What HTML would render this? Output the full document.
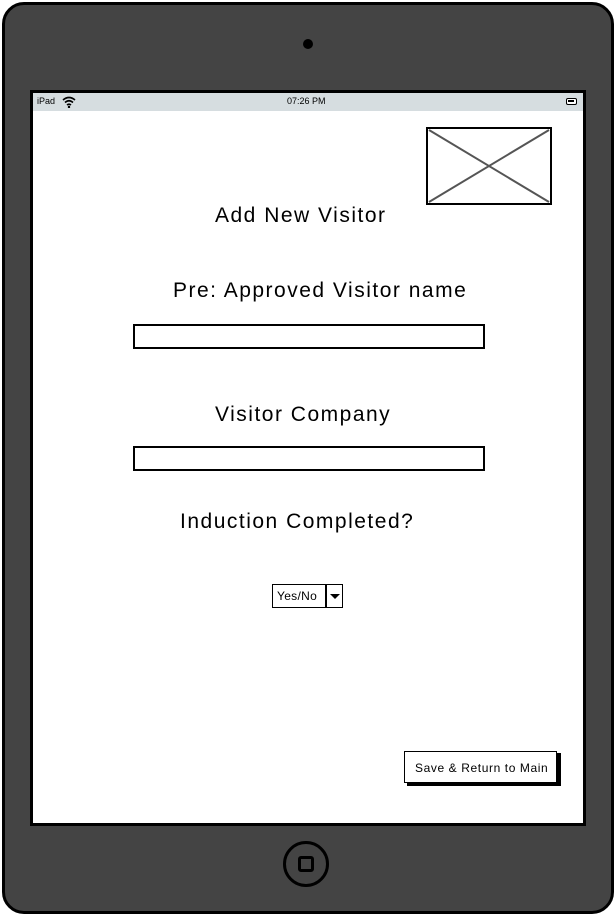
<!DOCTYPE html>
<html><head><style>
body{margin:0;width:616px;height:916px;background:#fff;position:relative;overflow:hidden;font-family:"Liberation Sans",sans-serif;}
.dev{position:absolute;left:2px;top:2px;width:606px;height:906px;background:#444;border:3px solid #000;border-radius:22px;}
.cam{position:absolute;left:303px;top:39px;width:10px;height:10px;border-radius:50%;background:#000;}
.scr{position:absolute;left:30px;top:90px;width:550px;height:730px;border:3px solid #000;background:#fff;}
.sb{position:absolute;left:0;top:0;width:550px;height:18px;background:#d6dde0;font-size:9px;}
.t{position:absolute;color:#000;white-space:nowrap;}
.big{font-size:21px;letter-spacing:1.5px;}
.in{position:absolute;border:2px solid #000;background:#fff;}
.home{position:absolute;left:283px;top:841px;width:46px;height:46px;border:3px solid #000;border-radius:50%;box-sizing:border-box;}
.home div{position:absolute;left:12px;top:12px;width:16px;height:16px;border:3px solid #000;border-radius:3px;box-sizing:border-box;}
</style></head><body>
<div class="dev"></div>
<div class="cam"></div>
<div class="scr">
 <div class="sb">
  <span class="t" style="left:4px;top:3px">iPad</span>
  <svg style="position:absolute;left:29px;top:3px" width="14" height="12" viewBox="0 0 14 12"><path d="M1 4Q7-1 13 4M3 6.5Q7 3 11 6.5M5 9Q7 7.5 9 9" stroke="#000" stroke-width="1.6" fill="none"/><circle cx="7" cy="11" r="1.2"/></svg>
  <span class="t" style="left:254px;top:3px">07:26 PM</span>
  <div style="position:absolute;left:533px;top:5px;width:11px;height:7px;border:1.5px solid #000;border-radius:2px;box-sizing:border-box;background:#fff"><div style="margin:1px;width:6px;height:2px;background:#000"></div></div>
 </div>
 <svg style="position:absolute;left:393px;top:34px" width="127" height="79"><rect x="1" y="1" width="124" height="76" fill="#fff" stroke="#000" stroke-width="2"/><path d="M3 3L123 75M123 3L3 75" stroke="#555" stroke-width="2"/></svg>
 <div class="t big" style="left:182px;top:111px">Add New Visitor</div>
 <div class="t big" style="left:140px;top:186px">Pre: Approved Visitor name</div>
 <div class="in" style="left:100px;top:231px;width:348px;height:21px"></div>
 <div class="t big" style="left:182px;top:310px">Visitor Company</div>
 <div class="in" style="left:100px;top:353px;width:348px;height:21px"></div>
 <div class="t big" style="left:147px;top:417px">Induction Completed?</div>
 <div class="in" style="left:239px;top:491px;width:69px;height:22px;border-width:1.5px">
  <span class="t" style="left:4px;top:4px;font-size:12px;letter-spacing:0.3px">Yes/No</span>
  <div style="position:absolute;left:52px;top:0;width:1.5px;height:22px;background:#000"></div>
  <div style="position:absolute;left:57px;top:9px;width:0;height:0;border-left:5px solid transparent;border-right:5px solid transparent;border-top:5px solid #000"></div>
 </div>
 <div style="position:absolute;left:374px;top:660px;width:154px;height:33px;background:#000"></div>
 <div class="in" style="left:371px;top:658px;width:151px;height:30px;border-width:1.5px">
  <span class="t" style="left:10px;top:9px;font-size:12px;letter-spacing:0.6px">Save &amp; Return to Main</span>
 </div>
</div>
<div class="home"><div></div></div>
</body></html>
